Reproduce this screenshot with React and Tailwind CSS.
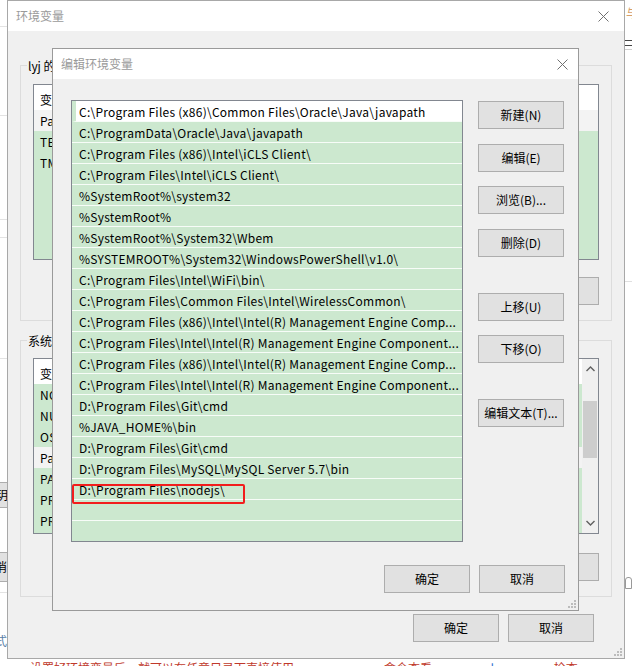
import React from "react";

function CloseX() {
  return (
    <svg width="11" height="11" viewBox="0 0 11 11">
      <path d="M0.5 0.5 L10.5 10.5 M10.5 0.5 L0.5 10.5" stroke="#707070" strokeWidth="1" fill="none" />
    </svg>
  );
}

function Grip() {
  return (
    <svg width="9" height="9" viewBox="0 0 9 9">
      <rect x="7" y="1" width="2" height="2" fill="#bcbcbc" />
      <rect x="4" y="4" width="2" height="2" fill="#bcbcbc" />
      <rect x="7" y="4" width="2" height="2" fill="#bcbcbc" />
      <rect x="1" y="7" width="2" height="2" fill="#bcbcbc" />
      <rect x="4" y="7" width="2" height="2" fill="#bcbcbc" />
      <rect x="7" y="7" width="2" height="2" fill="#bcbcbc" />
    </svg>
  );
}

function Btn({ children, w = "w-[86px]" }) {
  return (
    <div className={`${w} h-[28px] shrink-0 flex items-center justify-center bg-[#e1e1e1] border border-[#adadad] text-[12px] text-black leading-none`}>
      {children}
    </div>
  );
}

const pathRows = [
  "C:\\Program Files (x86)\\Common Files\\Oracle\\Java\\javapath",
  "C:\\ProgramData\\Oracle\\Java\\javapath",
  "C:\\Program Files (x86)\\Intel\\iCLS Client\\",
  "C:\\Program Files\\Intel\\iCLS Client\\",
  "%SystemRoot%\\system32",
  "%SystemRoot%",
  "%SystemRoot%\\System32\\Wbem",
  "%SYSTEMROOT%\\System32\\WindowsPowerShell\\v1.0\\",
  "C:\\Program Files\\Intel\\WiFi\\bin\\",
  "C:\\Program Files\\Common Files\\Intel\\WirelessCommon\\",
  "C:\\Program Files (x86)\\Intel\\Intel(R) Management Engine Comp...",
  "C:\\Program Files\\Intel\\Intel(R) Management Engine Component...",
  "C:\\Program Files (x86)\\Intel\\Intel(R) Management Engine Comp...",
  "C:\\Program Files\\Intel\\Intel(R) Management Engine Component...",
  "D:\\Program Files\\Git\\cmd",
  "%JAVA_HOME%\\bin",
  "D:\\Program Files\\Git\\cmd",
  "D:\\Program Files\\MySQL\\MySQL Server 5.7\\bin",
  "D:\\Program Files\\nodejs\\",
  "",
  "",
];

function VarList({ rows, selected, scroll }) {
  return (
    <div className="relative h-[176px] border border-[#828790] bg-[#cce8cf] flex overflow-hidden">
      <div className="flex-1 flex flex-col">
        <div className="h-[25px] shrink-0 bg-white flex items-center pt-[5px] pl-[6px] text-black">
          <span className="w-[200px]">变量</span>
          <span>值</span>
        </div>
        {rows.map((r, i) => (
          <div
            key={i}
            className={`h-[21px] shrink-0 flex items-center pl-[6px] text-black tracking-[0.25px] ${i === selected ? "bg-[#f3f3f3]" : ""}`}
          >
            <span className="w-[200px]">{r[0]}</span>
            <span>{r[1]}</span>
          </div>
        ))}
      </div>
      {scroll && (
        <div className="w-[16px] shrink-0 bg-[#f0f0f0] flex flex-col items-center">
          <div className="h-[20px] w-full flex items-center justify-center">
            <svg width="9" height="6" viewBox="0 0 9 6">
              <path d="M0.5 5 L4.5 1 L8.5 5" stroke="#606060" strokeWidth="1.4" fill="none" />
            </svg>
          </div>
          <div className="h-[22px]" />
          <div className="w-[14px] h-[57px] bg-[#cdcdcd]" />
          <div className="flex-1" />
          <div className="h-[20px] w-full flex items-center justify-center">
            <svg width="9" height="6" viewBox="0 0 9 6">
              <path d="M0.5 1 L4.5 5 L8.5 1" stroke="#606060" strokeWidth="1.4" fill="none" />
            </svg>
          </div>
        </div>
      )}
    </div>
  );
}

export default function App() {
  return (
    <div className="relative w-[632px] h-[666px] overflow-hidden bg-white font-['Noto_Sans_CJK_SC',sans-serif] text-[12px]">
      {/* background window fragments */}
      <div className="absolute left-0 top-[26px] w-[8px] h-px bg-[#e3e3e3]" />
      <div className="absolute left-0 top-[115px] w-[8px] h-px bg-[#e3e3e3]" />
      <div className="absolute left-0 top-[219px] w-[8px] h-px bg-[#e3e3e3]" />
      <div className="absolute left-0 top-[237px] w-[8px] h-px bg-[#e3e3e3]" />
      <div className="absolute left-0 top-[358px] w-[8px] h-px bg-[#e3e3e3]" />
      <div className="absolute left-0 top-[482px] w-[8px] h-[26px] bg-[#e1e1e1] border-y border-[#adadad] overflow-hidden text-[12px] leading-[24px] text-black">
        <span className="relative -left-[4px]">玥</span>
      </div>
      <div className="absolute left-0 top-[552px] w-[8px] h-[30px] bg-[#e1e1e1] border-y border-[#adadad] overflow-hidden text-[12px] leading-[28px] text-black">
        <span className="relative -left-[5px]">消</span>
      </div>
      <div className="absolute left-0 top-[592px] w-[8px] h-px bg-[#e3e3e3]" />
      <div className="absolute left-0 top-[632px] w-[8px] overflow-hidden text-[12px] text-[#5b7fa8]">
        <span className="relative -left-[5px]">式</span>
      </div>
      <div className="absolute left-[626px] top-[4px] overflow-hidden w-[6px] text-[12px] text-[#d7a06a]">与</div>
      <div className="absolute left-[625px] top-[40px] w-[7px] h-px bg-[#444]" />
      <div className="absolute left-[625px] top-[45px] w-[7px] h-px bg-[#444]" />
      <div className="absolute left-[625px] top-[49px] w-[7px] h-px bg-[#d0d0d0]" />
      <div className="absolute left-[625px] top-[281px] w-[7px] h-px bg-[#e0e0e0]" />
      <div className="absolute left-[625px] top-[577px] w-[7px] h-[12px] border border-[#999] rounded-t-[3px]" />
      <div className="absolute left-[30px] top-[662px] h-[4px] overflow-hidden whitespace-nowrap text-[12px] leading-[12px]">
        <span className="text-[#c0392b]">设置好环境变量后，就可以在任意目录下直接使用</span>
        <span className="text-[#c0392b] ml-[90px]">命令查看</span>
        <span className="text-[#2f6fd0] ml-[40px]">node -v</span>
        <span className="text-[#c0392b] ml-[40px]">检查</span>
        <span className="text-[#2f6fd0] ml-[60px]">npm -v</span>
      </div>

      {/* outer dialog: 环境变量 */}
      <div className="absolute left-[7px] top-0 w-[618px] h-[659px] border border-[#a8a8a8] bg-[#f0f0f0] flex flex-col">
        <div className="h-[30px] shrink-0 bg-white flex items-center justify-between pl-[8px] pr-[15px]">
          <span className="text-[#9a9a9a] text-[12px]">环境变量</span>
          <CloseX />
        </div>
        <div className="flex flex-col px-[12px] pt-[34px]">
          {/* group 1 */}
          <div className="relative border border-[#dcdcdc] h-[256px] px-[12px] pt-[18px] flex flex-col">
            <span className="absolute -top-[9px] left-[6px] bg-[#f0f0f0] px-[1px] text-black">lyj 的用户变量(U)</span>
            <VarList rows={[["Path", "C:\\Users\\lyj\\AppData\\Roaming\\npm"], ["TEMP", "%USERPROFILE%\\AppData\\Local\\Temp"], ["TMP", "%USERPROFILE%\\AppData\\Local\\Temp"]]} selected={0} />
            <div className="flex justify-end gap-[9px] mt-[17px]">
              <Btn>新建(N)...</Btn>
              <Btn>编辑(E)...</Btn>
              <Btn>删除(D)</Btn>
            </div>
          </div>
          {/* group 2 */}
          <div className="relative border border-[#dcdcdc] h-[257px] mt-[19px] px-[12px] pt-[17px] flex flex-col">
            <span className="absolute -top-[9px] left-[6px] bg-[#f0f0f0] px-[1px] text-black">系统变量(S)</span>
            <VarList
              rows={[
                ["NODE_PATH", "D:\\Program Files\\nodejs\\node_modules"],
                ["NUMBER_OF_PROCESSORS", "4"],
                ["OS", "Windows_NT"],
                ["Path", "C:\\Program Files (x86)\\Common Files\\Oracle"],
                ["PATHEXT", ".COM;.EXE;.BAT;.CMD;.VBS"],
                ["PROCESSOR_ARCHITECTURE", "AMD64"],
                ["PROCESSOR_IDENTIFIER", "Intel64 Family 6"],
              ]}
              selected={3}
              scroll
            />
            <div className="flex justify-end gap-[9px] mt-[19px]">
              <Btn>新建(W)...</Btn>
              <Btn>编辑(I)...</Btn>
              <Btn>删除(L)</Btn>
            </div>
          </div>
          <div className="flex justify-end gap-[9px] mt-[17px] pr-[18px]">
            <Btn>确定</Btn>
            <Btn>取消</Btn>
          </div>
        </div>
        <div className="absolute right-[2px] bottom-[2px]">
          <Grip />
        </div>
      </div>

      {/* inner dialog: 编辑环境变量 */}
      <div className="absolute left-[52px] top-[48px] w-[527px] h-[563px] border border-[#9a9a9a] bg-[#f0f0f0] flex flex-col">
        <div className="h-[30px] shrink-0 bg-white flex items-center justify-between pl-[8px] pr-[10px]">
          <span className="text-[#9a9a9a] text-[12px]">编辑环境变量</span>
          <CloseX />
        </div>
        <div className="flex pl-[18px] pt-[21px]">
          <div className="relative w-[392px] h-[442px] border border-[#828790] bg-[#cce8cf] flex flex-col overflow-hidden">
            {pathRows.map((r, i) => (
              <div
                key={i}
                className={`h-[21px] shrink-0 flex items-center pt-[1px] whitespace-nowrap text-black tracking-[0.25px] border-b border-[#f7fcf8] ${
                  i === 0 ? "bg-white border-l-[4px] border-l-[#cce8cf] pl-[3px]" : "pl-[7px]"
                }`}
              >
                {r}
              </div>
            ))}
            <div className="absolute left-0 top-[383px] w-[173px] h-[20px] border-2 border-[#f21d1d] rounded-[2px]" />
          </div>
          <div className="flex flex-col ml-[15px] pt-[1px]">
            <Btn>新建(N)</Btn>
            <div className="h-[15px]" />
            <Btn>编辑(E)</Btn>
            <div className="h-[14px]" />
            <Btn>浏览(B)...</Btn>
            <div className="h-[15px]" />
            <Btn>删除(D)</Btn>
            <div className="h-[36px]" />
            <Btn>上移(U)</Btn>
            <div className="h-[14px]" />
            <Btn>下移(O)</Btn>
            <div className="h-[36px]" />
            <Btn>编辑文本(T)...</Btn>
          </div>
        </div>
        <div className="flex justify-end gap-[9px] mt-[23px] pr-[13px]">
          <Btn>确定</Btn>
          <Btn>取消</Btn>
        </div>
        <div className="absolute right-[2px] bottom-[2px]">
          <Grip />
        </div>
      </div>
    </div>
  );
}
